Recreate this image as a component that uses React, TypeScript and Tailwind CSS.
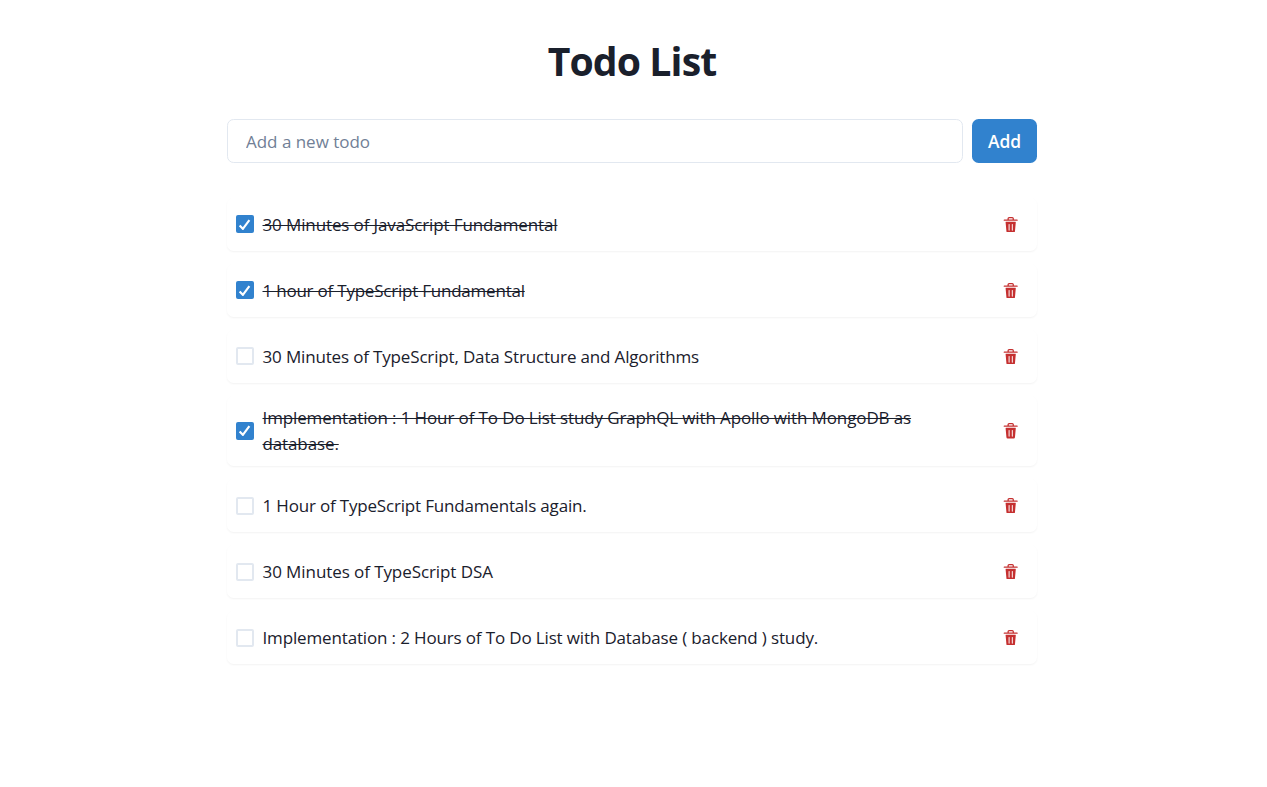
import { useState } from "react";

const initialTodos = [
  { text: "30 Minutes of JavaScript Fundamental", done: true, tracking: "tracking-[-0.12px]" },
  { text: "1 hour of TypeScript Fundamental", done: true, tracking: "tracking-[-0.22px]" },
  { text: "30 Minutes of TypeScript, Data Structure and Algorithms", done: false, tracking: "tracking-[-0.16px]" },
  {
    text: "Implementation : 1 Hour of To Do List study GraphQL with Apollo with MongoDB as database.",
    done: true,
    tracking: "tracking-[-0.12px]",
  },
  { text: "1 Hour of TypeScript Fundamentals again.", done: false, tracking: "tracking-[-0.18px]" },
  { text: "30 Minutes of TypeScript DSA", done: false, tracking: "tracking-[-0.08px]" },
  {
    text: "Implementation : 2 Hours of To Do List with Database ( backend ) study.",
    done: false,
    tracking: "tracking-[-0.15px]",
  },
];

function TrashIcon() {
  return (
    <svg viewBox="0 0 24 24" className="size-[15.4px]" fill="currentColor" aria-hidden="true">
      <path d="M19.452 7.5H4.547a.5.5 0 00-.5.545l1.287 14.136A2 2 0 007.326 24h9.347a2 2 0 001.992-1.819L19.95 8.045a.5.5 0 00-.129-.382.5.5 0 00-.369-.163zm-9.2 13a.75.75 0 01-1.5 0v-9a.75.75 0 011.5 0zm5 0a.75.75 0 01-1.5 0v-9a.75.75 0 011.5 0zM22 4h-4.75a.25.25 0 01-.25-.25V2.5A2.5 2.5 0 0014.5 0h-5A2.5 2.5 0 007 2.5v1.25a.25.25 0 01-.25.25H2a1 1 0 000 2h20a1 1 0 000-2zM9 3.75V2.5a.5.5 0 01.5-.5h5a.5.5 0 01.5.5v1.25a.25.25 0 01-.25.25h-5.5A.25.25 0 019 3.75z" />
    </svg>
  );
}

function Checkbox({ checked, onClick }: { checked: boolean; onClick: () => void }) {
  return (
    <button
      type="button"
      role="checkbox"
      aria-checked={checked}
      onClick={onClick}
      className={
        checked
          ? "flex size-[18px] shrink-0 items-center justify-center rounded-[2px] bg-[#3182ce] text-white"
          : "flex size-[18px] shrink-0 items-center justify-center rounded-[2px] border-2 border-[#e2e8f0]"
      }
    >
      {checked && (
        <svg viewBox="0 0 12 10" className="mr-px h-[11px] w-[13px]" fill="none" stroke="currentColor" strokeWidth="2">
          <polyline points="1.5 6 4.5 9 10.5 1" />
        </svg>
      )}
    </button>
  );
}

export default function App() {
  const [todos, setTodos] = useState(initialTodos);
  return (
    <main className="flex min-h-[787px] flex-col items-center bg-white pr-[3px] font-['Open_Sans','Noto_Sans',sans-serif] text-[#1a202c]">
      <div className="flex w-[810px] flex-col pt-[34px]">
        <h1 className="text-center text-[39.2px] leading-[53px] font-bold tracking-[-0.9px]">Todo List</h1>
        <div className="mt-8 flex gap-[9px]">
          <input
            placeholder="Add a new todo"
            className="h-11 min-w-0 flex-1 rounded-[6.6px] border border-[#e2e8f0] px-[18px] text-[17px] tracking-[-0.02px] placeholder:text-[#718096]"
          />
          <button type="button" className="h-11 w-[65px] rounded-[6.6px] bg-[#3182ce] text-[17.4px] font-semibold text-white">
            Add
          </button>
        </div>
        <ul className="mt-[35px] flex flex-col gap-[13.2px]">
          {todos.map((todo, i) => (
            <li
              key={todo.text}
              className="flex min-h-[52.8px] items-center rounded-[6.6px] px-[9px] py-[8.5px] shadow-[0_1px_2px_0_rgba(0,0,0,0.05)]"
            >
              <Checkbox
                checked={todo.done}
                onClick={() => setTodos(todos.map((t, j) => (j === i ? { ...t, done: !t.done } : t)))}
              />
              <span className="ml-[8.5px] w-[690px] pt-px text-[17px] leading-[26px]">
                <span className={`${todo.tracking} ${todo.done ? "line-through decoration-1" : ""}`}>{todo.text}</span>
              </span>
              <button
                type="button"
                aria-label="Delete todo"
                onClick={() => setTodos(todos.filter((_, j) => j !== i))}
                className="ml-auto flex h-[34.8px] w-[35px] shrink-0 items-center justify-center text-[#c53030]"
              >
                <TrashIcon />
              </button>
            </li>
          ))}
        </ul>
      </div>
    </main>
  );
}
